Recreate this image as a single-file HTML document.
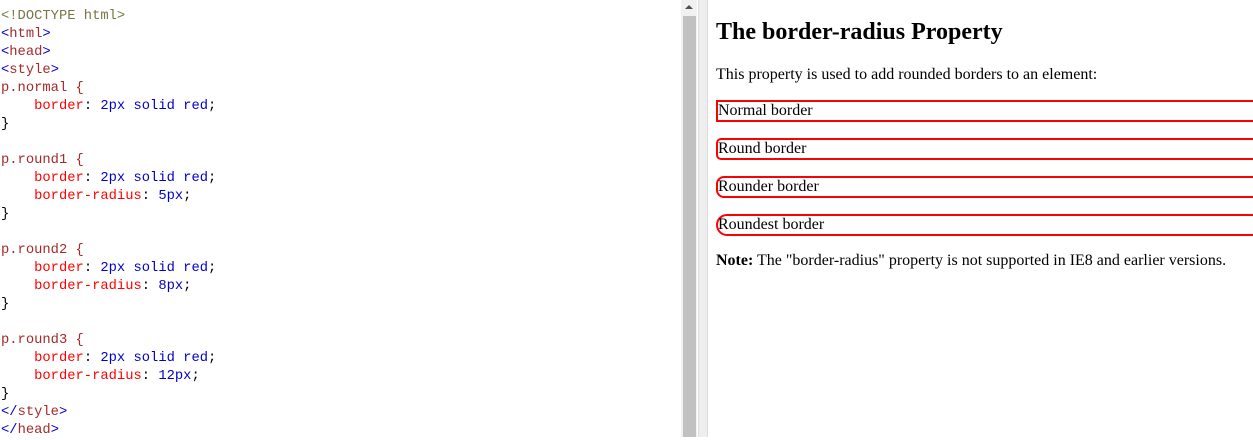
<!DOCTYPE html>
<html><head><style>
body{margin:0;width:1253px;height:437px;overflow:hidden;background:#fff;position:relative}
#code{position:absolute;left:1px;top:8px;font:13.8px/18px "Liberation Mono",monospace;white-space:pre;color:#000}
.t{color:#a52a2a}.b{color:#0000cd}.p{color:#f00}.v{color:#0000cd}.d{color:#774}
#track{position:absolute;left:681px;top:0;width:16px;height:437px;background:#f1f1f1}
#thumb{position:absolute;left:683px;top:16px;width:13px;height:421px;background:#c1c1c1}
#arrow{position:absolute;left:685px;top:5px;width:0;height:0;border-left:4px solid transparent;border-right:4px solid transparent;border-bottom:4px solid #505050}
#div{position:absolute;left:698px;top:0;width:8px;height:437px;background:#eee;border-left:1px solid #ddd;border-right:1px solid #ddd}
#out{position:absolute;left:708px;top:0;right:0;padding:0 0 0 8px;font-family:"Liberation Serif",serif;font-size:16px;color:#000}
h1{font-size:24px;margin:17px 0 0;line-height:31px}
#out p{margin:16px 0;line-height:18px}
.bx{border:2px solid red;margin-right:-10px!important}
</style></head><body>
<div id="code"><span class="d">&lt;!DOCTYPE html&gt;</span>
<span class="b">&lt;</span><span class="t">html</span><span class="b">&gt;</span>
<span class="b">&lt;</span><span class="t">head</span><span class="b">&gt;</span>
<span class="b">&lt;</span><span class="t">style</span><span class="b">&gt;</span>
<span class="t">p.normal {</span>
    <span class="p">border</span>: <span class="v">2px solid red</span>;
}

<span class="t">p.round1 {</span>
    <span class="p">border</span>: <span class="v">2px solid red</span>;
    <span class="p">border-radius</span>: <span class="v">5px</span>;
}

<span class="t">p.round2 {</span>
    <span class="p">border</span>: <span class="v">2px solid red</span>;
    <span class="p">border-radius</span>: <span class="v">8px</span>;
}

<span class="t">p.round3 {</span>
    <span class="p">border</span>: <span class="v">2px solid red</span>;
    <span class="p">border-radius</span>: <span class="v">12px</span>;
}
<span class="b">&lt;/</span><span class="t">style</span><span class="b">&gt;</span>
<span class="b">&lt;/</span><span class="t">head</span><span class="b">&gt;</span></div>
<div id="track"></div><div id="thumb"></div><div id="arrow"></div><div id="div"></div>
<div id="out">
<h1>The border-radius Property</h1>
<p style="margin-top:18px">This property is used to add rounded borders to an element:</p>
<p class="bx">Normal border</p>
<p class="bx" style="border-radius:5px">Round border</p>
<p class="bx" style="border-radius:8px">Rounder border</p>
<p class="bx" style="border-radius:12px">Roundest border</p>
<p><b>Note:</b> The "border-radius" property is not supported in IE8 and earlier versions.</p>
</div>
</body></html>
